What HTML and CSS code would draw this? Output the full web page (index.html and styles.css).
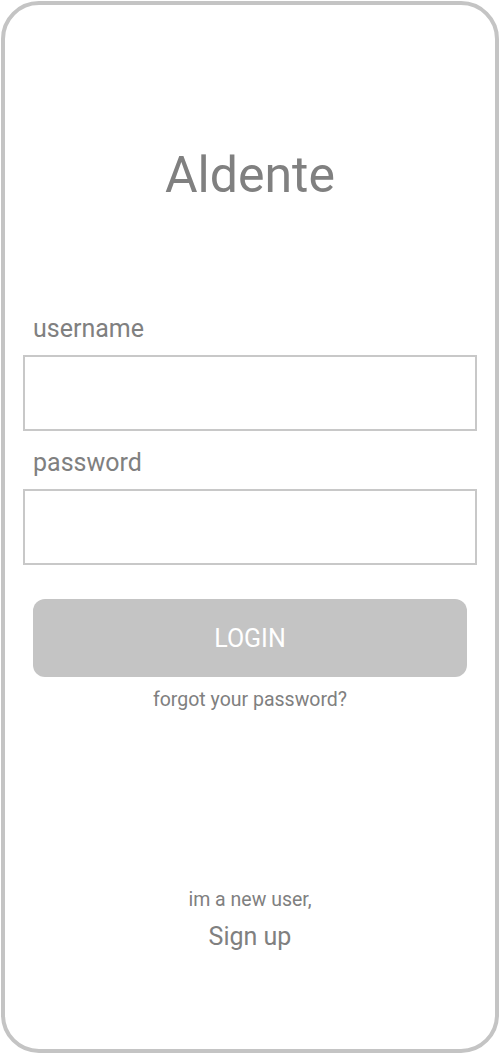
FILE: index.html
```html
<!DOCTYPE html>
<html>
<head>
<meta charset="utf-8">
<link rel="stylesheet" href="styles.css">
</head>
<body>
<div class="phone">
  <h1 class="title">Aldente</h1>
  <div class="form">
    <label class="label">username</label>
    <div class="input"></div>
    <label class="label label-pw">password</label>
    <div class="input"></div>
  </div>
  <div class="login">LOGIN</div>
  <div class="forgot">forgot your password?</div>
  <div class="spacer"></div>
  <div class="newuser">im a new user,</div>
  <div class="signup">Sign up</div>
</div>
</body>
</html>
```
FILE: styles.css
```css
html, body { margin: 0; padding: 0; background: #fff; }
body { font-family: Roboto, "Liberation Sans", sans-serif; color: #808080; }
.phone {
  box-sizing: border-box;
  margin: 1px;
  width: 498px;
  height: 1052px;
  border: 4px solid #c4c4c4;
  border-radius: 38px;
  display: flex;
  flex-direction: column;
  align-items: center;
}
.title {
  margin: 138px 0 0;
  font-size: 50px;
  font-weight: 400;
  line-height: 64px;
  color: #808080;
}
.form {
  align-self: stretch;
  margin: 107px 0 0;
  padding: 0 18px;
  display: flex;
  flex-direction: column;
}
.label {
  font-size: 25px;
  line-height: 30px;
  padding-left: 10px;
  margin-bottom: 11px;
}
.label-pw { margin-top: 17px; }
.input {
  height: 72px;
  border: 2px solid #c8c8c8;
}
.login {
  align-self: stretch;
  margin: 34px 28px 0;
  height: 78px;
  border-radius: 12px;
  background: #c4c4c4;
  color: #fff;
  font-size: 25px;
  display: flex;
  align-items: center;
  justify-content: center;
}
.forgot { margin-top: 11px; font-size: 19.5px; line-height: 24px; }
.spacer { height: 176px; }
.newuser { font-size: 19.5px; line-height: 24px; }
.signup { margin-top: 10px; font-size: 25px; line-height: 30px; }
```
